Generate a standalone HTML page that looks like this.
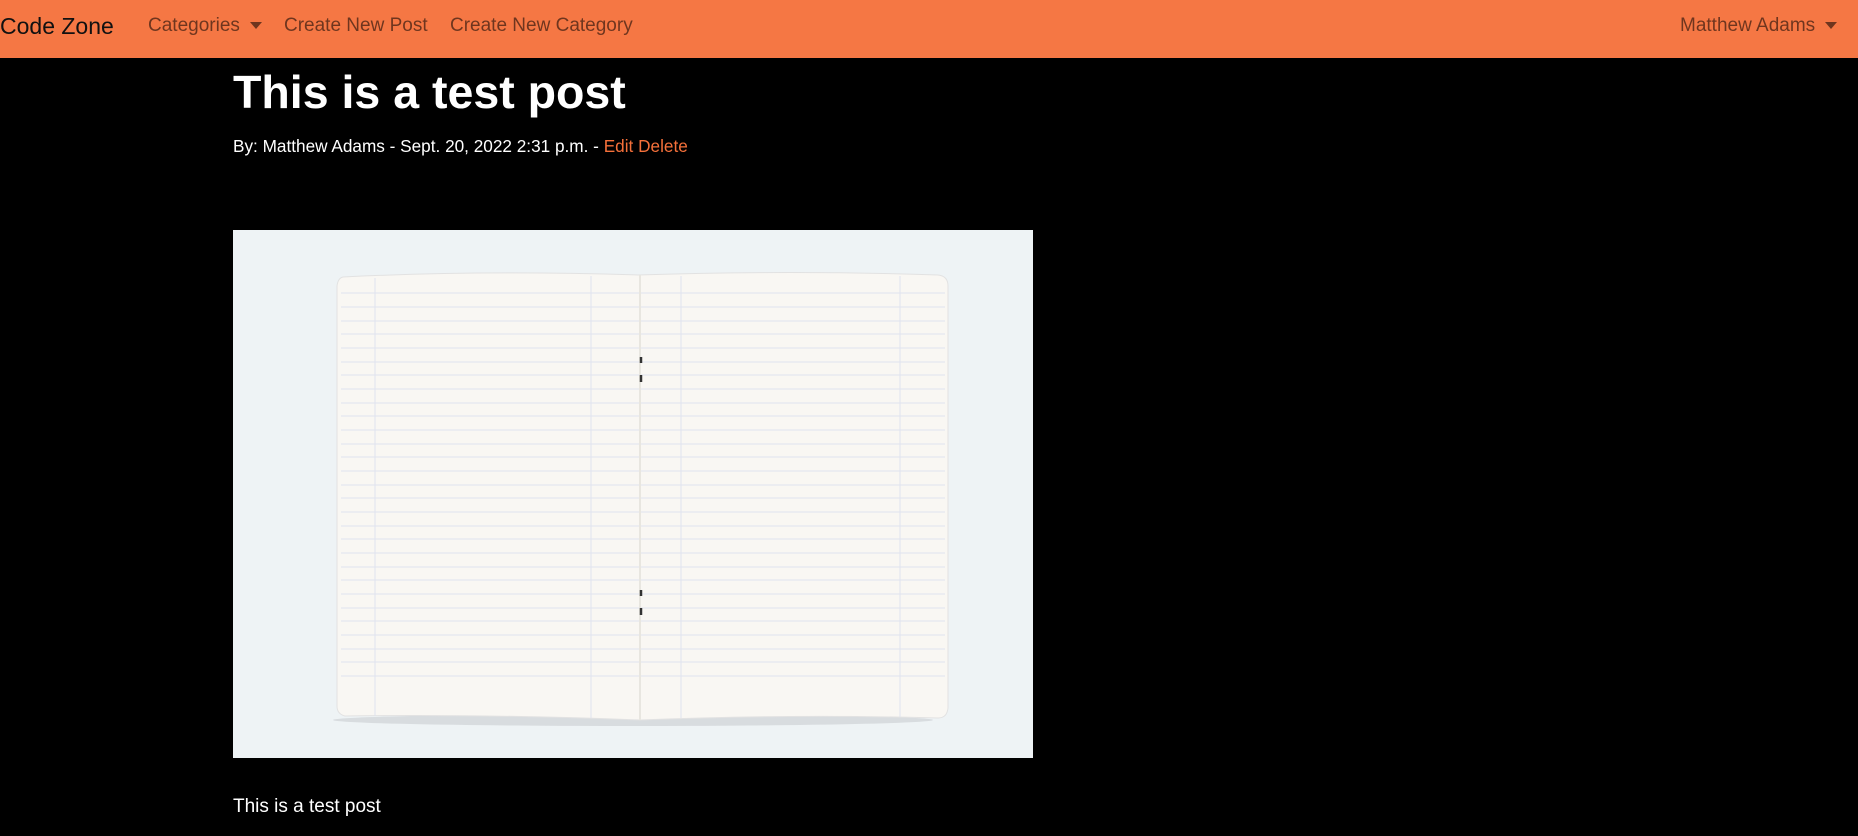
<!DOCTYPE html>
<html><head><meta charset="utf-8">
<style>
html,body{margin:0;padding:0;background:#000;width:1858px;height:836px;overflow:hidden;font-family:"Liberation Sans",sans-serif;}
.nav{position:absolute;left:0;top:0;width:1858px;height:58px;background:#f57744;}
.nav span{position:absolute;top:0;line-height:52px;font-size:19px;color:rgba(0,0,0,.55);white-space:nowrap;}
.nav .brand{font-size:23px;color:#111;left:0;}
.caret{display:inline-block;width:0;height:0;border-left:6px solid transparent;border-right:6px solid transparent;border-top:7px solid rgba(0,0,0,.55);vertical-align:middle;margin-left:10px;}
h1{position:absolute;left:233px;top:62px;margin:0;font-size:46.5px;font-weight:bold;color:#fff;line-height:60px;white-space:nowrap;}
.meta{position:absolute;left:233px;top:136px;font-size:17.2px;color:#fff;white-space:nowrap;}
.meta a{color:#f5703a;text-decoration:none;}
.img{position:absolute;left:233px;top:230px;width:800px;height:528px;}
.body{position:absolute;left:233px;top:796px;font-size:19px;color:#fff;}
</style></head><body>
<div class="nav">
<span class="brand">Code Zone</span>
<span style="left:148px">Categories<i class="caret"></i></span>
<span style="left:284px">Create New Post</span>
<span style="left:450px">Create New Category</span>
<span style="left:1680px">Matthew Adams<i class="caret"></i></span>
</div>
<h1>This is a test post</h1>
<div class="meta">By: Matthew Adams - Sept. 20, 2022 2:31 p.m. - <a>Edit</a> <a>Delete</a></div>
<svg class="img" viewBox="0 0 800 528" width="800" height="528">
<rect width="800" height="528" fill="#eef3f5"/>
<ellipse cx="400" cy="490" rx="300" ry="6" fill="#c9cdd0" opacity=".6"/>
<path d="M110 47 Q250 40 405 45 Q560 40 705 45 Q715 46 715 56 L715 478 Q714 488 705 488 Q560 484 407 490 Q250 484 112 486 Q104 484 104 476 L104 56 Q105 48 110 47Z" fill="#f9f7f3" stroke="#e2e2e2" stroke-width="1"/>
<g stroke="#dfe3ef" stroke-width="1">
<line x1="108" y1="63" x2="712" y2="63"/>
<line x1="108" y1="77" x2="712" y2="77"/>
<line x1="108" y1="91" x2="712" y2="91"/>
<line x1="108" y1="104" x2="712" y2="104"/>
<line x1="108" y1="118" x2="712" y2="118"/>
<line x1="108" y1="132" x2="712" y2="132"/>
<line x1="108" y1="145" x2="712" y2="145"/>
<line x1="108" y1="159" x2="712" y2="159"/>
<line x1="108" y1="173" x2="712" y2="173"/>
<line x1="108" y1="186" x2="712" y2="186"/>
<line x1="108" y1="200" x2="712" y2="200"/>
<line x1="108" y1="214" x2="712" y2="214"/>
<line x1="108" y1="227" x2="712" y2="227"/>
<line x1="108" y1="241" x2="712" y2="241"/>
<line x1="108" y1="255" x2="712" y2="255"/>
<line x1="108" y1="268" x2="712" y2="268"/>
<line x1="108" y1="282" x2="712" y2="282"/>
<line x1="108" y1="296" x2="712" y2="296"/>
<line x1="108" y1="309" x2="712" y2="309"/>
<line x1="108" y1="323" x2="712" y2="323"/>
<line x1="108" y1="337" x2="712" y2="337"/>
<line x1="108" y1="350" x2="712" y2="350"/>
<line x1="108" y1="364" x2="712" y2="364"/>
<line x1="108" y1="378" x2="712" y2="378"/>
<line x1="108" y1="391" x2="712" y2="391"/>
<line x1="108" y1="405" x2="712" y2="405"/>
<line x1="108" y1="419" x2="712" y2="419"/>
<line x1="108" y1="432" x2="712" y2="432"/>
<line x1="108" y1="446" x2="712" y2="446"/>
<line x1="142" y1="48" x2="142" y2="486"/>
<line x1="358" y1="46" x2="358" y2="488"/>
<line x1="448" y1="46" x2="448" y2="488"/>
<line x1="667" y1="46" x2="667" y2="487"/>
</g>
<line x1="407" y1="45" x2="407" y2="490" stroke="#e8e6e0" stroke-width="2"/>
<g stroke="#333" stroke-width="2.5"><line x1="408" y1="127" x2="408" y2="133"/><line x1="408" y1="145" x2="408" y2="152"/><line x1="408" y1="360" x2="408" y2="366"/><line x1="408" y1="378" x2="408" y2="385"/></g>
</svg>
<div class="body">This is a test post</div>
</body></html>
